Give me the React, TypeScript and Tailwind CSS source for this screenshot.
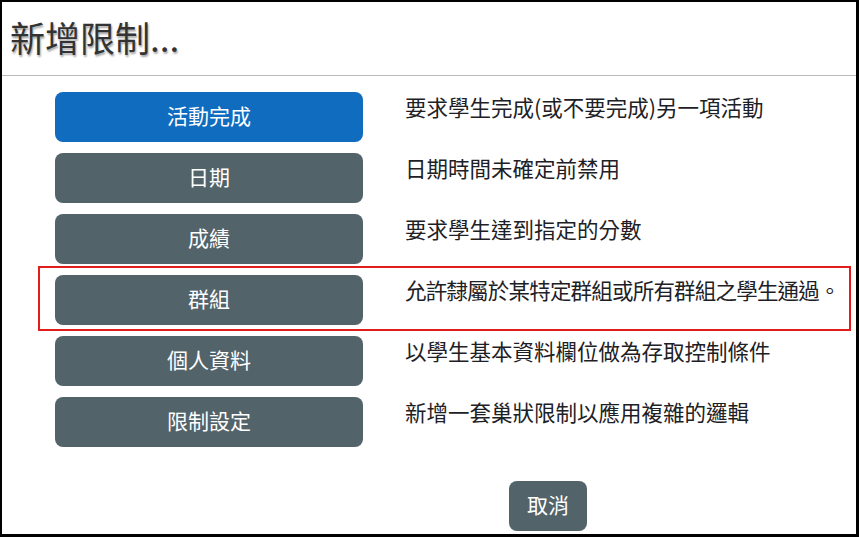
import React from "react";

const rows = [
  { label: "活動完成", desc: "要求學生完成(或不要完成)另一項活動", primary: true, tight: false },
  { label: "日期", desc: "日期時間未確定前禁用", tight: false },
  { label: "成績", desc: "要求學生達到指定的分數", tight: false },
  { label: "群組", desc: "允許隸屬於某特定群組或所有群組之學生通過。", tight: true },
  { label: "個人資料", desc: "以學生基本資料欄位做為存取控制條件", tight: false },
  { label: "限制設定", desc: "新增一套巢狀限制以應用複雜的邏輯", tight: false },
];

export default function App() {
  return (
    <div
      className="relative w-[859px] h-[537px] overflow-hidden bg-white border-l-2 border-t-2 border-r-[3px] border-b-[3px] border-black"
      style={{ fontFamily: '"Noto Sans CJK TC", "Noto Sans", sans-serif' }}
    >
      <div className="h-[74px] border-b border-[#bbbbbb] flex items-center pl-[8px]">
        <h1 className="text-[35px] leading-none text-[#333333] [text-shadow:1px_2px_2px_rgba(0,0,0,0.35)] -mt-[4px]">
          新增限制...
        </h1>
      </div>
      <div className="pt-[16px] pl-[53px] flex flex-col gap-[11px]">
        {rows.map((r) => (
          <div key={r.label} className="flex items-start">
            <button
              className={`w-[308px] h-[50px] rounded-[8px] text-white text-[21px] leading-none flex items-center justify-center pb-[3px] ${
                r.primary ? "bg-[#0f6cbf]" : "bg-[#52636a]"
              }`}
            >
              {r.label}
            </button>
            <div
              className={`ml-[42px] -mt-[1px] text-[21.5px] leading-[32px] text-[#1d2125] whitespace-nowrap ${
                r.tight ? "tracking-[-0.8px]" : ""
              }`}
            >
              {r.desc}
            </div>
          </div>
        ))}
      </div>
      <button className="mt-[34px] ml-[507px] w-[78px] h-[50px] rounded-[8px] bg-[#52636a] text-white text-[21px] leading-none flex items-center justify-center pb-[3px]">
        取消
      </button>
      <div className="absolute left-[36px] top-[264px] w-[813px] h-[65px] border-2 border-[#e31c1c] pointer-events-none" />
    </div>
  );
}
